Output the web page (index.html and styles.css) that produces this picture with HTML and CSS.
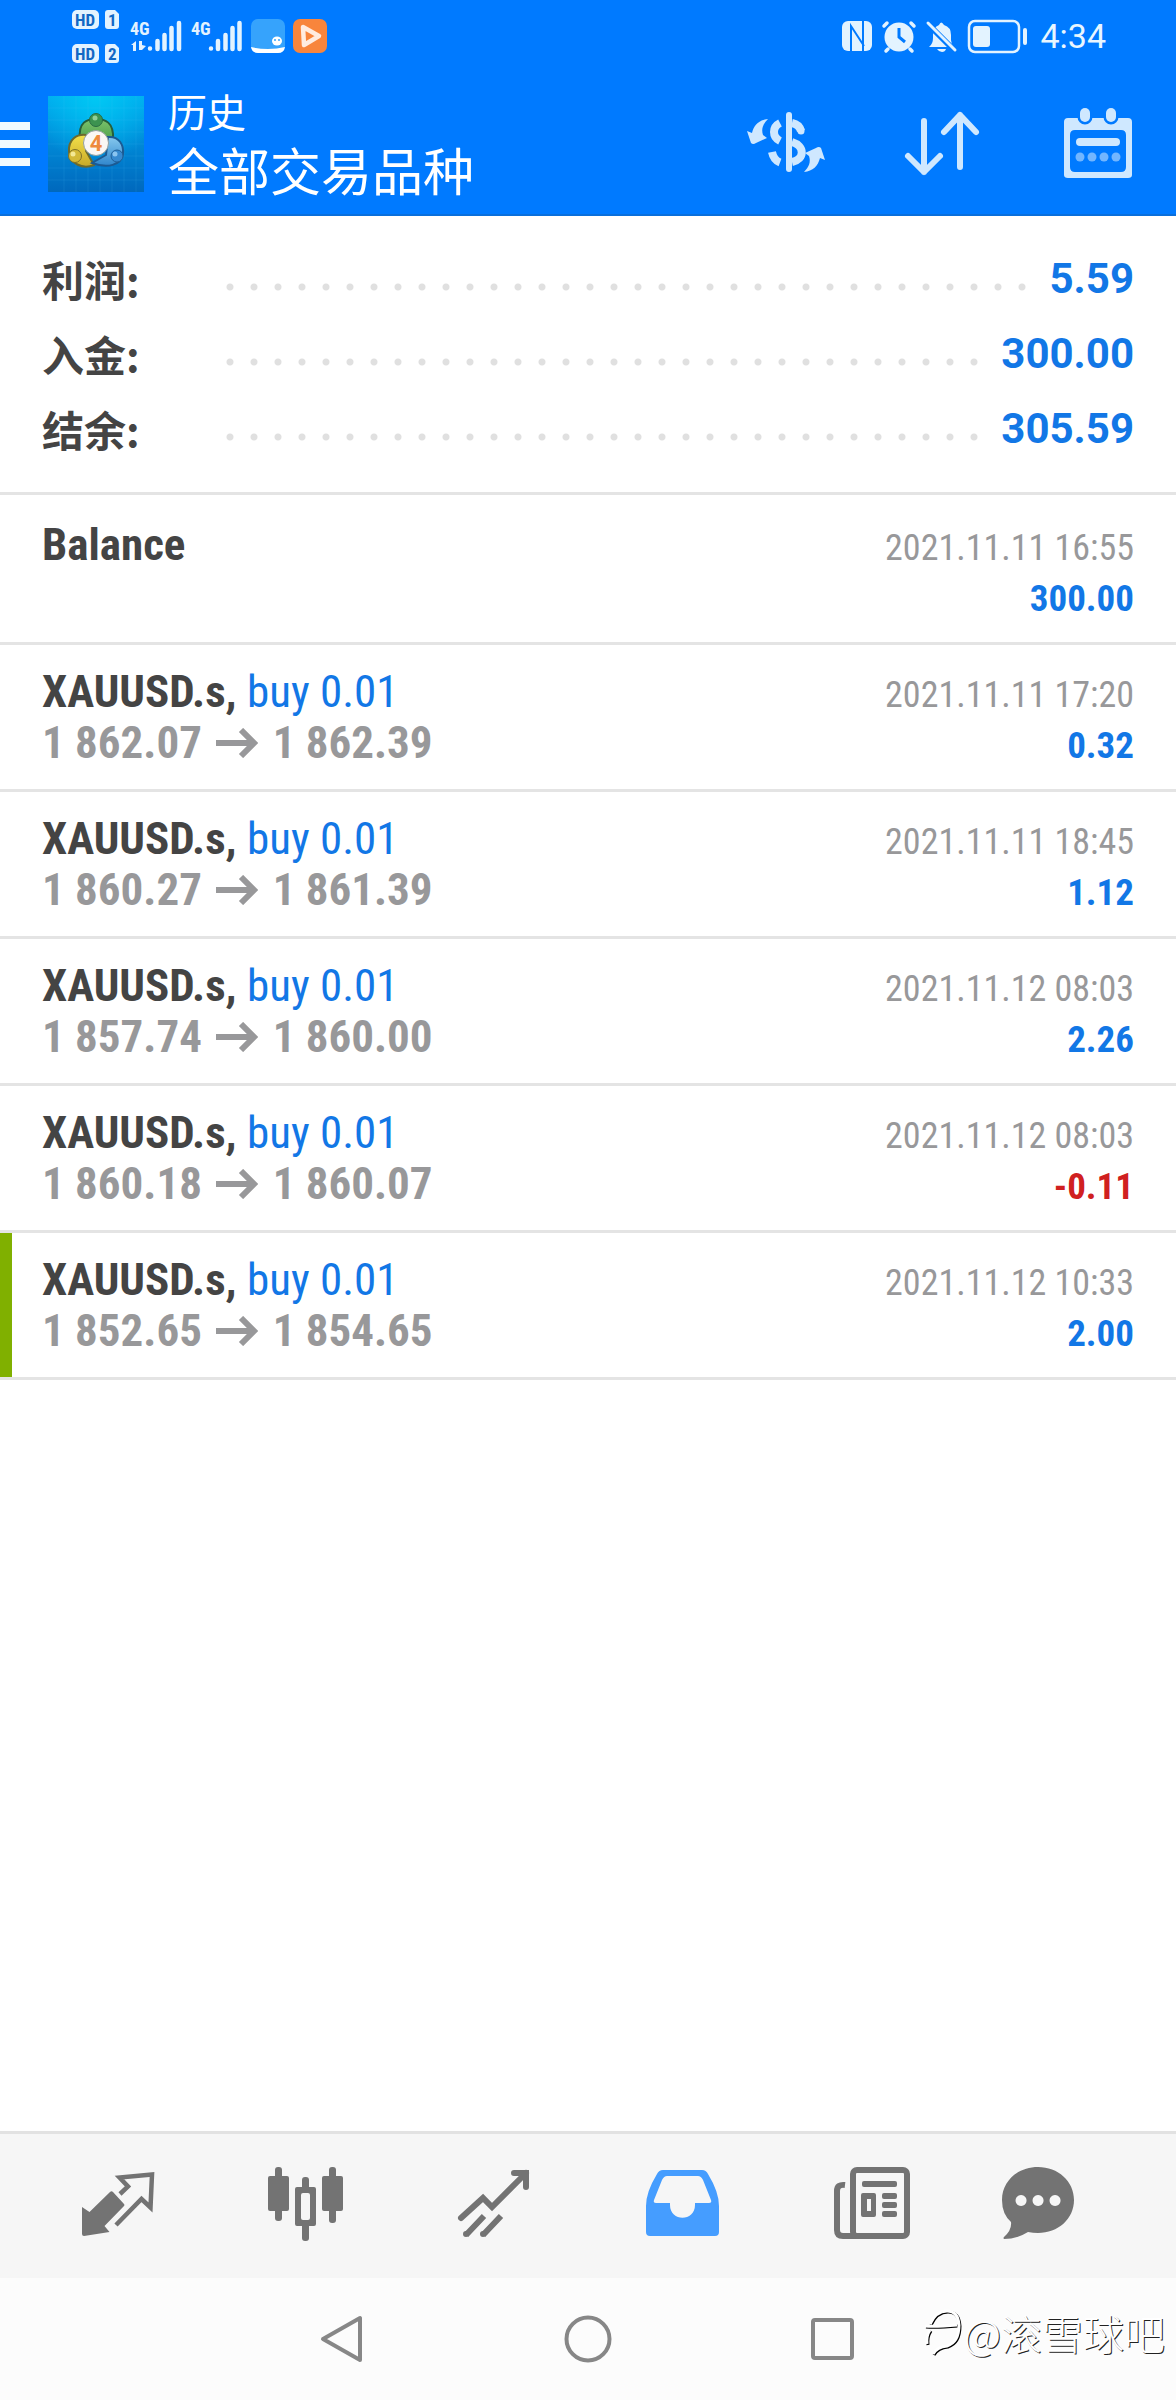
FILE: index.html
```html
<!DOCTYPE html>
<html lang="zh-CN">
<head>
<meta charset="utf-8">
<meta name="viewport" content="width=device-width, initial-scale=1">
<title>历史</title>
<link rel="stylesheet" href="styles.css">
</head>
<body>
<div class="app">
  <header class="header">
    <div class="status">
      <svg class="status-left" viewBox="0 0 260 56" aria-hidden="true">
        <g fill="#e3f3ff">
          <rect x="2" y="2" width="27" height="19" rx="5"/>
          <path d="M38 2h7l4 4v12a3 3 0 0 1-3 3h-8a3 3 0 0 1-3-3V5a3 3 0 0 1 3-3z"/>
          <rect x="2" y="36" width="27" height="19" rx="5"/>
          <path d="M38 36h7l4 4v12a3 3 0 0 1-3 3h-8a3 3 0 0 1-3-3V39a3 3 0 0 1 3-3z"/>
          <path d="M61 37l5-4v10h-3v-6zM69 33h3v4l4 1-4 4h-3z"/>
          <g class="net"><text x="60" y="27">4G</text><text x="121" y="27">4G</text></g>
        </g>
        <g class="sim"><text x="5" y="18">HD</text><text x="38" y="18">1</text><text x="5" y="52">HD</text><text x="38" y="52">2</text></g>
        <path d="M80 40.500v0M87.500 33v8M94.500 27v14M101.500 20v21M109 15v26M141 40.500v0M148 33v8M155.500 27v14M162.500 20v21M169.500 15v26" fill="none" stroke="#e3f3ff" stroke-width="4.500" stroke-linecap="round"/>
        <rect x="181" y="11" width="34" height="34" rx="7" fill="#36a3fc"/>
        <path d="M181 39q8 2 17 2t17-2q-1 6-7 6h-20q-6 0-7-6z" fill="#fff"/>
        <ellipse cx="207" cy="33" rx="5" ry="4.500" fill="#fff"/><circle cx="205" cy="32" r="1" fill="#36a3fc"/><circle cx="209" cy="32" r="1" fill="#36a3fc"/>
        <rect x="223" y="11" width="34" height="34" rx="7" fill="#f8853c"/>
        <path d="M233 19l16 9-15 9z" fill="none" stroke="#ffece0" stroke-width="4.500" stroke-linejoin="round"/>
      </svg>
      <div class="status-right">
        <svg class="status-icons" viewBox="0 0 190 40" aria-hidden="true">
          <rect x="2" y="5" width="30" height="30" rx="6" fill="#e3f3ff"/>
          <path d="M11 35V10l13 20M23 5v25M11 10v20M23 35V17" fill="none" stroke="#007aff" stroke-width="2"/>
          <g fill="none" stroke="#e3f3ff" stroke-width="3.500" stroke-linecap="round"><path d="M44 10l3-3M74 10l-3-3M48 33l-2 2M70 33l2 2"/></g>
          <circle cx="59" cy="21" r="14.500" fill="#e3f3ff"/>
          <path d="M59 12v9l6 5" fill="none" stroke="#007aff" stroke-width="3"/>
          <path d="M89 31q4-3 4-9v-3q0-8 6-10 2-5 5 0 7 2 7 10v5q0 4 3 7zM97 33h9q-1 3-4 3t-5-3z" fill="#e3f3ff"/>
          <path d="M87 7l28 28" stroke="#007aff" stroke-width="6"/><path d="M88 7l27 27" stroke="#e3f3ff" stroke-width="3" stroke-linecap="round"/>
          <rect x="129" y="5" width="50" height="31" rx="6" fill="none" stroke="#e3f3ff" stroke-width="2.500"/>
          <rect x="133" y="10" width="17" height="21" rx="3" fill="#e3f3ff"/><rect x="183" y="12" width="4" height="17" rx="2" fill="#e3f3ff"/>
        </svg>
        <time class="clock">4:34</time>
      </div>
    </div>
    <div class="toolbar">
      <button class="menu" aria-label="菜单"><svg viewBox="0 0 30 44" width="30" height="44"><path d="M0 0h30v8H0zM0 18h30v8H0zM0 36h30v8H0z" fill="#f0faff"/></svg></button>
      <svg class="logo" viewBox="0 0 96 96" role="img" aria-label="MetaTrader 4">
        <defs>
          <linearGradient id="bg" x1="0" y1="0" x2="0" y2="1"><stop offset="0" stop-color="#00a8ee"/><stop offset="1" stop-color="#0068bd"/></linearGradient>
          <radialGradient id="glow" cx=".5" cy="0" r=".7"><stop offset="0" stop-color="#00c8f4"/><stop offset="1" stop-color="#00c8f4" stop-opacity="0"/></radialGradient>
          <linearGradient id="green" x1="0" y1="0" x2="0" y2="1"><stop offset="0" stop-color="#7cc36c"/><stop offset="1" stop-color="#3d9440"/></linearGradient>
          <linearGradient id="gold" x1="0" y1="0" x2="0" y2="1"><stop offset="0" stop-color="#f3e04a"/><stop offset="1" stop-color="#c8a928"/></linearGradient>
          <linearGradient id="blue" x1="0" y1="0" x2="0" y2="1"><stop offset="0" stop-color="#86c8ee"/><stop offset="1" stop-color="#2f86cc"/></linearGradient>
        </defs>
        <rect width="96" height="96" fill="url(#bg)"/><rect width="96" height="96" fill="url(#glow)"/>
        <path d="M16 0v96M28 0v96M40 0v96M52 0v96M64 0v96M76 0v96M88 0v96M0 12h96M0 24h96M0 36h96M0 48h96M0 60h96M0 72h96M0 84h96" stroke="#5cd0ff" stroke-opacity=".12"/>
        <path d="M32 43C30 26 39 23 48 23s18 3 17 20l-4 9H37z" fill="url(#green)" stroke="#265f3a" stroke-width="2"/>
        <path d="M38 39C29 38 20 43 21 56c1 11 13 18 25 13l-8-14z" fill="url(#gold)" stroke="#6c6a2c" stroke-width="2"/>
        <path d="M60 41c11-1 16 8 15 17-2 11-15 15-31 9l14-8z" fill="url(#blue)" stroke="#1c5a92" stroke-width="2"/>
        <circle cx="48" cy="24" r="6.500" fill="#3c9350" stroke="#286b42"/><circle cx="27" cy="60" r="6.500" fill="#d3b937" stroke="#7d7028"/><circle cx="69" cy="60" r="6" fill="#3689cf" stroke="#1f5f98"/>
        <circle cx="47" cy="22" r="2.500" fill="#91cf98"/><circle cx="25" cy="58" r="2.500" fill="#f4e995"/><circle cx="67" cy="58" r="2.500" fill="#8ac4ef"/>
        <circle cx="48" cy="47" r="12.500" fill="#faf7f4" stroke="#93a0a0"/>
        <text class="logo-num" x="48" y="55" text-anchor="middle">4</text>
      </svg>
      <div class="titles"><h1 class="title">历史</h1><p class="subtitle">全部交易品种</p></div>
      <div class="actions">
        <button aria-label="货币"><svg class="icon" viewBox="0 0 96 96">
          <g fill="none" stroke="currentColor" stroke-width="8"><path d="M51 19v54" stroke-width="6" stroke-linecap="round"/><path d="M42 27c-8 4-8 14 0 18M34 56c1 5 4 9 8 10.500M54 27c5 1 8 4 9 8M54 46c13 4 13 17 0 20"/><path d="M63 34v1" stroke-linecap="round" stroke-width="7"/></g>
          <path id="swoop" d="M30 23C21 24 16 29 14 37l-5-2 4 12q2 2 5 0l11-5-4-3c-2-6 0-11 5-16z" fill="currentColor"/><use href="#swoop" transform="rotate(180 48 49.500)"/></svg></button>
        <button aria-label="排序"><svg class="icon" viewBox="0 0 96 96"><path d="M30 25v51M14 60l16 16 16-16M66 71V19M50 36l16-17 16 17" fill="none" stroke="currentColor" stroke-width="6" stroke-linecap="round" stroke-linejoin="round"/></svg></button>
        <button aria-label="日期"><svg class="icon" viewBox="0 0 96 96">
          <path fill-rule="evenodd" d="M18 22h60q4 0 4 4v53q0 3-4 3H18q-4 0-4-3V26q0-4 4-4zM25 34q-5 0-5 5v32q0 5 5 5h46q5 0 5-5V39q0-5-5-5z" fill="currentColor"/>
          <g fill="currentColor" stroke="#007aff" stroke-width="5" paint-order="stroke"><rect x="30" y="12" width="10" height="14" rx="5"/><rect x="56" y="12" width="10" height="14" rx="5"/></g>
          <rect x="26" y="42" width="44" height="8" rx="4" fill="currentColor"/><g fill="currentColor" opacity=".55"><circle cx="30" cy="61" r="4.500"/><circle cx="42" cy="61" r="4.500"/><circle cx="54" cy="61" r="4.500"/><circle cx="66" cy="61" r="4.500"/></g></svg></button>
      </div>
    </div>
  </header>

  <main class="content">
    <dl class="summary">
      <div class="sum-row"><dt>利润:</dt><dd>5.59</dd></div>
      <div class="sum-row"><dt>入金:</dt><dd>300.00</dd></div>
      <div class="sum-row"><dt>结余:</dt><dd>305.59</dd></div>
    </dl>
    <ul class="deals">
      <li class="deal deal-balance"><div class="line"><strong class="symbol">Balance</strong><time class="date">2021.11.11 16:55</time></div><div class="line"><span class="prices">&nbsp;</span><span class="profit">300.00</span></div></li>
      <li class="deal"><div class="line"><span><strong class="symbol">XAUUSD.s,</strong> <span class="side">buy 0.01</span></span><time class="date">2021.11.11 17:20</time></div><div class="line"><span class="prices">1 862.07 <svg class="arrow" viewBox="0 0 42 30" aria-label="至"><path d="M0 15h37M25 2l13 13-13 13"/></svg> 1 862.39</span><span class="profit">0.32</span></div></li>
      <li class="deal"><div class="line"><span><strong class="symbol">XAUUSD.s,</strong> <span class="side">buy 0.01</span></span><time class="date">2021.11.11 18:45</time></div><div class="line"><span class="prices">1 860.27 <svg class="arrow" viewBox="0 0 42 30" aria-label="至"><path d="M0 15h37M25 2l13 13-13 13"/></svg> 1 861.39</span><span class="profit">1.12</span></div></li>
      <li class="deal"><div class="line"><span><strong class="symbol">XAUUSD.s,</strong> <span class="side">buy 0.01</span></span><time class="date">2021.11.12 08:03</time></div><div class="line"><span class="prices">1 857.74 <svg class="arrow" viewBox="0 0 42 30" aria-label="至"><path d="M0 15h37M25 2l13 13-13 13"/></svg> 1 860.00</span><span class="profit">2.26</span></div></li>
      <li class="deal"><div class="line"><span><strong class="symbol">XAUUSD.s,</strong> <span class="side">buy 0.01</span></span><time class="date">2021.11.12 08:03</time></div><div class="line"><span class="prices">1 860.18 <svg class="arrow" viewBox="0 0 42 30" aria-label="至"><path d="M0 15h37M25 2l13 13-13 13"/></svg> 1 860.07</span><span class="profit loss">-0.11</span></div></li>
      <li class="deal deal-marked"><div class="line"><span><strong class="symbol">XAUUSD.s,</strong> <span class="side">buy 0.01</span></span><time class="date">2021.11.12 10:33</time></div><div class="line"><span class="prices">1 852.65 <svg class="arrow" viewBox="0 0 42 30" aria-label="至"><path d="M0 15h37M25 2l13 13-13 13"/></svg> 1 854.65</span><span class="profit">2.00</span></div></li>
    </ul>
  </main>

  <nav class="tabs">
    <button aria-label="行情"><svg class="icon" viewBox="0 0 96 96"><path d="M12 49l7.500 5L40 34q1.500-1.500 3 0l11 12q1 1 0 2L34.500 68l5 6L14 78q-2 0-2-2z" fill="currentColor"/><path d="M50 36l8-7.500-8.500-9L82 16.500l-1.500 33-9-8.500L46 67" fill="none" stroke="currentColor" stroke-width="4.500"/></svg></button>
    <button aria-label="图表"><svg class="icon" viewBox="0 0 96 96"><g fill="currentColor"><rect x="10" y="18" width="21" height="35" rx="2"/><rect x="17" y="9" width="7" height="54" rx="3"/><rect x="64" y="18" width="21" height="35" rx="2"/><rect x="71" y="9" width="7" height="56" rx="3"/><rect x="44" y="19" width="7" height="14" rx="3"/><rect x="44" y="64" width="7" height="19" rx="3"/><path fill-rule="evenodd" d="M39 29h17q2 0 2 2v35q0 2-2 2H39q-2 0-2-2V31q0-2 2-2zm6 6q-2 0-2 2v23q0 2 2 2h5q2 0 2-2V37q0-2-2-2z"/></g></svg></button>
    <button aria-label="交易"><svg class="icon" viewBox="0 0 96 96"><g fill="none" stroke="currentColor" stroke-width="6"><path d="M15 60l22-20 9 9 34-34M68 15h12v14" stroke-linecap="round" stroke-linejoin="miter"/><path d="M20 77l18-19M37 77l18-19"/><path d="M20 76v0M37 76v0" stroke-linecap="round"/></g></svg></button>
    <button class="current" aria-label="历史" aria-current="page"><svg class="icon" viewBox="0 0 96 96"><path fill-rule="evenodd" d="M29 12h39q4 0 6 4 11 18 11 32v26q0 4-4 4H16q-4 0-4-4V48q0-14 11-32 2-4 6-4zM33 18q-3 0-5 4l-8 20q-1 3 2 3h14v2c0 17 25 17 25 0v-2h14q3 0 2-3l-8-20q-2-4-5-4z" fill="currentColor"/></svg></button>
    <button aria-label="新闻"><svg class="icon" viewBox="-2 0 96 96"><path d="M21 27q-8-1-8 6v39q0 6 6 6h15" fill="none" stroke="currentColor" stroke-width="6"/><rect x="29" y="12" width="54" height="66" rx="4" fill="none" stroke="currentColor" stroke-width="6"/><g fill="currentColor"><rect x="38" y="23" width="35" height="6" rx="2"/><path fill-rule="evenodd" d="M39 35h11q2 0 2 2v20q0 2-2 2H39q-2 0-2-2V37q0-2 2-2zm4 6v12h4V41z"/><rect x="58" y="35" width="15" height="6" rx="2"/><rect x="58" y="44" width="15" height="6" rx="2"/><rect x="58" y="53" width="15" height="6" rx="2"/></g></svg></button>
    <button aria-label="消息"><svg class="icon" viewBox="0 0 96 96"><path fill-rule="evenodd" d="M48 9c20 0 36 14 36 33S68 75 48 75q-5 0-10-1-11 7-24 7-1-1 0-2 8-7 7-15-9-8-9-22C12 23 28 9 48 9zM31 37a5.500 5.500 0 1 0 .1 0zM48 37a5.500 5.500 0 1 0 .1 0zM65 37a5.500 5.500 0 1 0 .1 0z" fill="currentColor"/></svg></button>
  </nav>
  <footer class="system">
    <button class="back" aria-label="返回"><svg viewBox="0 0 48 48"><path d="M42 3v42L5 24z"/></svg></button>
    <button aria-label="主页"><svg viewBox="0 0 48 48"><circle cx="24" cy="24" r="21.500"/></svg></button>
    <button aria-label="最近任务"><svg viewBox="0 0 48 48"><rect x="3" y="5" width="39" height="38" rx="2"/></svg></button>
    <div class="watermark"><svg viewBox="0 0 38 50" aria-hidden="true"><g fill="none" stroke-width="3"><path d="M2 20q10 1 32-1M7 18Q13 5 24 5t12 14q0 17-12 21-10 1-14 8M7 24Q3 30 4 38" stroke="#000"/><path d="M1 19q10 1 32-1M6 17Q12 4 23 4t12 14q0 17-12 21-10 1-14 8M6 23Q2 29 3 37" stroke="#fff"/></g></svg><span>@滚雪球吧</span></div>
  </footer>
</div>
</body>
</html>
```
FILE: styles.css
```css
* { box-sizing: border-box; margin: 0; padding: 0; }

body {
  background: #fff;
  color: #444;
  font-family: Roboto, "Noto Sans CJK SC", sans-serif;
}

button {
  display: flex;
  align-items: center;
  justify-content: center;
  border: 0;
  background: none;
  color: inherit;
}

svg { display: block; }
.icon { width: 96px; height: 96px; }

.app { display: flex; flex-direction: column; min-height: 100vh; }

/* Header */
.header { background: #007aff; color: #fff; box-shadow: inset 0 -2px #0a6fdb; }
.status { display: flex; justify-content: space-between; align-items: center; height: 72px; padding: 0 70px; }
.status-left { width: 260px; height: 56px; }
.status-right { display: flex; align-items: center; gap: 10px; }
.status-icons { width: 190px; height: 40px; }
.clock { font-size: 34px; line-height: 40px; color: #e9f6ff; }
.sim { font: bold 17px/1 "Roboto Condensed", Roboto, sans-serif; fill: #1268c4; }
.net { font: bold 18px/1 "Roboto Condensed", Roboto, sans-serif; }
.toolbar { display: flex; align-items: center; height: 144px; padding-right: 30px; }
.menu { width: 30px; height: 96px; margin-right: 18px; }
.logo { width: 96px; height: 96px; margin-right: 24px; }
.logo-num { font: bold 22px/1 Roboto, sans-serif; fill: #ee8a3c; }
.titles { flex: 1; padding-top: 8px; }
.title { font-size: 39px; line-height: 52px; font-weight: 400; }
.subtitle { font-size: 51px; line-height: 68px; }
.actions { display: flex; gap: 60px; color: #cfe8ff; }

/* Account totals */
.content { flex: 1; }
.summary { padding: 25px 42px 26px; border-bottom: 3px solid #e4e4e4; }
.sum-row { display: flex; align-items: center; height: 75px; font-size: 42px; font-weight: 700; }
.sum-row dt { width: 176px; font-family: "Noto Sans CJK SC", sans-serif; line-height: 60px; }
.sum-row dd { display: flex; flex: 1; align-items: center; gap: 11px; color: #1277e6; }
.sum-row dd::before {
  content: "";
  flex: 1;
  height: 8px;
  margin-top: 16px;
  background: radial-gradient(circle, #e0e0e0 3px, transparent 4px) 0 0 / 24px 8px;
}

/* Deals */
.deals { list-style: none; font-family: "Roboto Condensed", "Liberation Sans Narrow", Roboto, sans-serif; }
.deal { padding: 21px 42px; border-bottom: 3px solid #e4e4e4; }
.deal-balance { padding-top: 24px; }
.deal-marked { box-shadow: inset 12px 0 #80b000; }
.line { display: flex; justify-content: space-between; align-items: baseline; height: 51px; font-size: 45px; line-height: 51px; }
.side { color: #1277e6; }
.prices { color: #98989a; font-weight: 700; }
.arrow { display: inline-block; width: 42px; height: 30px; margin: 0 4px; fill: none; stroke: #98989a; stroke-width: 6; }
.date { color: #98989a; font-size: 36px; }
.profit { color: #1277e6; font-size: 37px; font-weight: 700; }
.loss { color: #d02020; }

/* Bottom bars */
.tabs {
  display: grid;
  grid-template-columns: repeat(5, 188fr) 148fr;
  height: 147px;
  padding: 0 64px 0 24px;
  border-top: 3px solid #e2e2e2;
  background: #f6f6f6;
  color: #737373;
}
.current { color: #459dff; }
.system {
  position: relative;
  display: grid;
  grid-template-columns: 219fr repeat(3, 246fr) 219fr;
  height: 122px;
  background: #fcfcfc;
}
.back { grid-column: 2; }
.system button svg { width: 48px; height: 48px; fill: none; stroke: #878787; stroke-width: 4; stroke-linejoin: round; }
.watermark {
  position: absolute;
  right: 11px;
  bottom: 40px;
  display: flex;
  align-items: center;
  gap: 2px;
  color: #fff;
  font: 300 41px/56px "Noto Sans CJK SC", sans-serif;
  text-shadow: 1px 1px 0 #222;
}
.watermark svg { width: 38px; height: 50px; }
```
